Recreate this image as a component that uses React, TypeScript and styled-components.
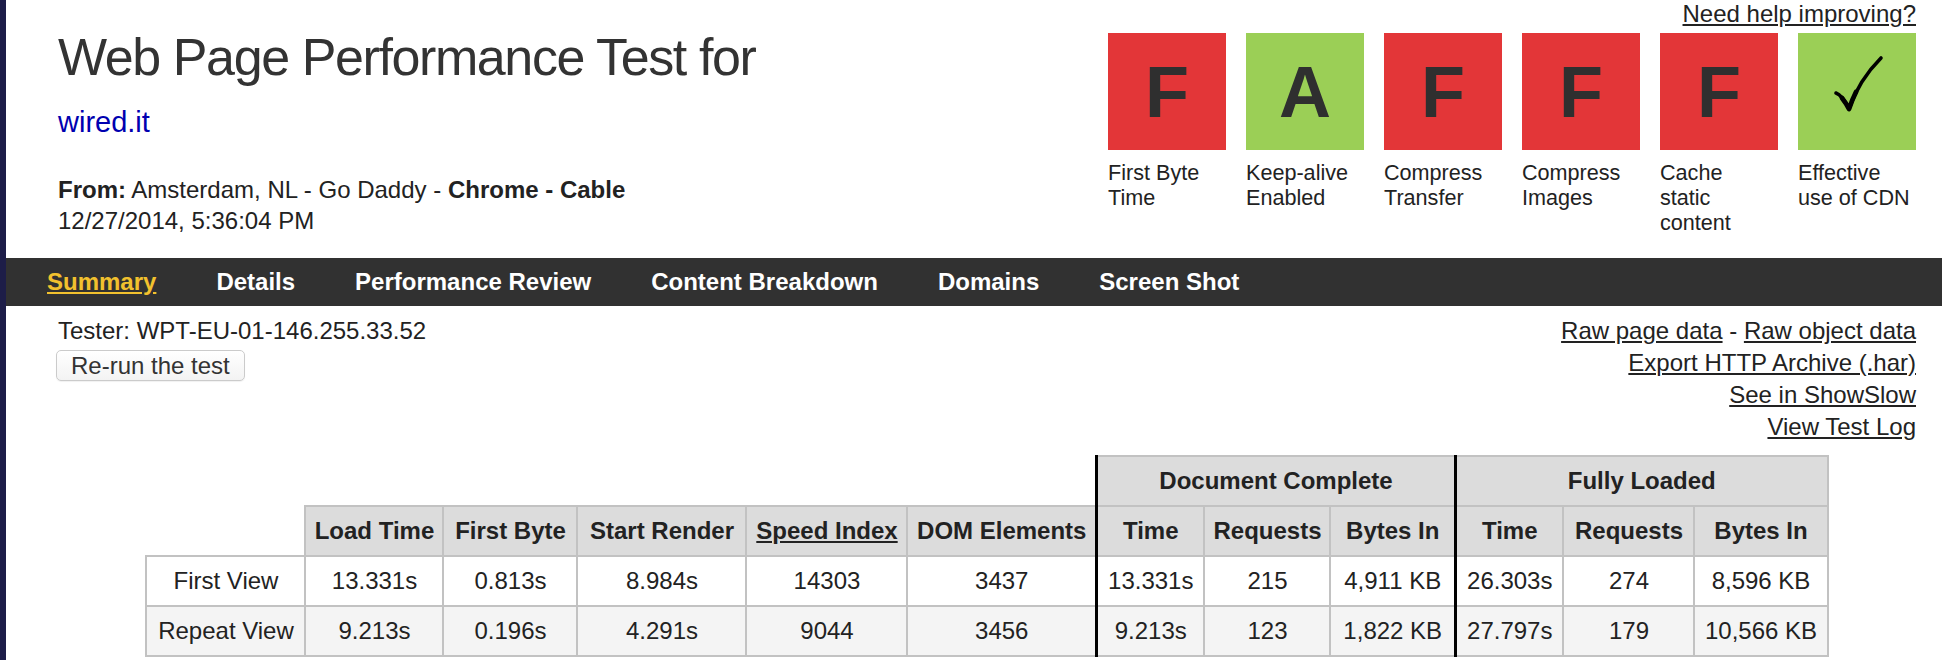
import React from "react";
import styled, { createGlobalStyle } from "styled-components";

const GlobalStyle = createGlobalStyle`
  body {
    margin: 0;
    background: #fff;
    color: #222;
    font-family: "Liberation Sans", Arial, Helvetica, sans-serif;
  }
`;

const Page = styled.div`
  min-height: 660px;
  border-left: 6px solid #1d1d48;
  box-sizing: border-box;
  overflow: hidden;
`;

const Header = styled.header`
  display: flex;
  justify-content: space-between;
  align-items: flex-start;
  height: 258px;
  padding: 0 26px 0 52px;
  box-sizing: border-box;
`;

const TitleBlock = styled.div`
  display: flex;
  flex-direction: column;
`;

const Title = styled.h1`
  margin: 29px 0 0;
  font-size: 52px;
  line-height: 56px;
  letter-spacing: -1.4px;
  font-weight: normal;
  color: #333;
  white-space: nowrap;
`;

const SiteLink = styled.a`
  margin-top: 20px;
  font-size: 29px;
  line-height: 34px;
  color: #0000b0;
  text-decoration: none;
`;

const Meta = styled.div`
  margin-top: 35px;
  font-size: 24px;
  line-height: 31px;
  white-space: nowrap;
`;

const GradeArea = styled.div`
  display: flex;
  flex-direction: column;
  align-items: flex-end;
`;

const TextLink = styled.a`
  color: #222;
  text-decoration: underline;
`;

const HelpLink = styled(TextLink)`
  font-size: 24px;
  line-height: 27px;
`;

const Grades = styled.div`
  display: flex;
  gap: 20px;
  margin-top: 6px;
`;

const Grade = styled.div`
  width: 118px;
  display: flex;
  flex-direction: column;
`;

const GradeBox = styled.div<{ $tone: "bad" | "good" }>`
  height: 117px;
  display: flex;
  align-items: center;
  justify-content: center;
  background: ${(p) => (p.$tone === "good" ? "#9bcf56" : "#e33638")};
  color: #2f2f2f;
  font-size: 72px;
  font-weight: bold;
`;

const GradeLabel = styled.div`
  margin-top: 10px;
  font-size: 21.6px;
  line-height: 25px;
  color: #222;
`;

const Nav = styled.nav`
  display: flex;
  align-items: center;
  height: 48px;
  padding-left: 11px;
  background: #313131;
`;

const NavItem = styled.a<{ $active?: boolean }>`
  padding: 0 30px;
  font-size: 24px;
  font-weight: bold;
  white-space: nowrap;
  color: ${(p) => (p.$active ? "#f2c12e" : "#fff")};
  text-decoration: ${(p) => (p.$active ? "underline" : "none")};
`;

const Content = styled.main`
  padding: 9px 26px 0 52px;
`;

const TopRow = styled.div`
  display: flex;
  justify-content: space-between;
  align-items: flex-start;
`;

const TesterBlock = styled.div`
  display: flex;
  flex-direction: column;
  align-items: flex-start;
`;

const TesterLine = styled.div`
  font-size: 24px;
  line-height: 31px;
`;

const RerunButton = styled.button`
  margin: 4px 0 0 -2px;
  height: 31px;
  padding: 0 14px;
  font-family: inherit;
  font-size: 24px;
  line-height: 29px;
  color: #333;
  background: linear-gradient(#ffffff, #f3f3f3);
  border: 1px solid #cbcbcb;
  border-radius: 5px;
  box-shadow: 0 1px 1px rgba(0, 0, 0, 0.06);
`;

const LinkList = styled.div`
  text-align: right;
  font-size: 24px;
  line-height: 32px;
`;

const Results = styled.table`
  margin: 12px auto 0;
  width: 1681px;
  table-layout: fixed;
  border-collapse: collapse;
  font-size: 24px;
`;

const Col = styled.col<{ $w: number }>`
  width: ${(p) => p.$w}px;
`;

const Blank = styled.td`
  border: none;
  padding: 0;
`;

const HeadCell = styled.th<{ $divider?: boolean }>`
  height: 48px;
  padding: 0 4px;
  background: #dcdcdc;
  border: 2px solid #c2c2c2;
  border-left: ${(p) => (p.$divider ? "3px solid #000" : "2px solid #c2c2c2")};
  font-weight: bold;
  text-align: center;
  white-space: nowrap;
`;

const Row = styled.tr<{ $shade?: boolean }>`
  background: ${(p) => (p.$shade ? "#f4f4f4" : "#fff")};
`;

const Cell = styled.td<{ $divider?: boolean }>`
  height: 48px;
  padding: 0 4px;
  border: 2px solid #c2c2c2;
  border-left: ${(p) => (p.$divider ? "3px solid #000" : "2px solid #c2c2c2")};
  text-align: center;
  white-space: nowrap;
`;

const Check = () => (
  <svg width="118" height="117" viewBox="0 0 118 117">
    <path
      d="M38 60 Q44 62 51 76 Q61 47 83 25"
      fill="none"
      stroke="#000"
      strokeWidth="3.6"
      strokeLinecap="round"
      strokeLinejoin="round"
    />
    <path
      d="M44 65 Q48 70 51 76 Q54 67 58 59"
      fill="none"
      stroke="#000"
      strokeWidth="4.8"
      strokeLinecap="round"
      strokeLinejoin="round"
    />
  </svg>
);

const grades: { letter?: string; tone: "bad" | "good"; label: string }[] = [
  { letter: "F", tone: "bad", label: "First Byte Time" },
  { letter: "A", tone: "good", label: "Keep-alive Enabled" },
  { letter: "F", tone: "bad", label: "Compress Transfer" },
  { letter: "F", tone: "bad", label: "Compress Images" },
  { letter: "F", tone: "bad", label: "Cache static content" },
  { tone: "good", label: "Effective use of CDN" },
];

const navItems = [
  "Summary",
  "Details",
  "Performance Review",
  "Content Breakdown",
  "Domains",
  "Screen Shot",
];

const colWidths = [159, 138, 134, 169, 161, 189, 108, 126, 125, 108, 131, 133];

const metricHeads = [
  "Load Time",
  "First Byte",
  "Start Render",
  "Speed Index",
  "DOM Elements",
  "Time",
  "Requests",
  "Bytes In",
  "Time",
  "Requests",
  "Bytes In",
];

const runs = [
  {
    name: "First View",
    values: ["13.331s", "0.813s", "8.984s", "14303", "3437", "13.331s", "215", "4,911 KB", "26.303s", "274", "8,596 KB"],
  },
  {
    name: "Repeat View",
    values: ["9.213s", "0.196s", "4.291s", "9044", "3456", "9.213s", "123", "1,822 KB", "27.797s", "179", "10,566 KB"],
  },
];

// columns that start a new group get the heavy black rule
const isDivider = (i: number) => i === 5 || i === 8;

export default function App() {
  return (
    <Page>
      <GlobalStyle />
      <Header>
        <TitleBlock>
          <Title>Web Page Performance Test for</Title>
          <SiteLink href="#">wired.it</SiteLink>
          <Meta>
            <b>From:</b> Amsterdam, NL - Go Daddy - <b>Chrome - Cable</b>
            <br />
            12/27/2014, 5:36:04 PM
          </Meta>
        </TitleBlock>

        <GradeArea>
          <HelpLink href="#">Need help improving?</HelpLink>
          <Grades>
            {grades.map((g) => (
              <Grade key={g.label}>
                <GradeBox $tone={g.tone}>{g.letter ?? <Check />}</GradeBox>
                <GradeLabel>{g.label}</GradeLabel>
              </Grade>
            ))}
          </Grades>
        </GradeArea>
      </Header>

      <Nav>
        {navItems.map((item, i) => (
          <NavItem key={item} href="#" $active={i === 0}>
            {item}
          </NavItem>
        ))}
      </Nav>

      <Content>
        <TopRow>
          <TesterBlock>
            <TesterLine>Tester: WPT-EU-01-146.255.33.52</TesterLine>
            <RerunButton>Re-run the test</RerunButton>
          </TesterBlock>
          <LinkList>
            <TextLink href="#">Raw page data</TextLink> -{" "}
            <TextLink href="#">Raw object data</TextLink>
            <br />
            <TextLink href="#">Export HTTP Archive (.har)</TextLink>
            <br />
            <TextLink href="#">See in ShowSlow</TextLink>
            <br />
            <TextLink href="#">View Test Log</TextLink>
          </LinkList>
        </TopRow>

        <Results>
          <colgroup>
            {colWidths.map((w, i) => (
              <Col key={i} $w={w} />
            ))}
          </colgroup>
          <thead>
            <tr>
              <Blank colSpan={6} />
              <HeadCell colSpan={3} $divider>
                Document Complete
              </HeadCell>
              <HeadCell colSpan={3} $divider>
                Fully Loaded
              </HeadCell>
            </tr>
            <tr>
              <Blank />
              {metricHeads.map((h, i) => (
                <HeadCell key={i} $divider={isDivider(i)}>
                  {h === "Speed Index" ? <TextLink href="#">{h}</TextLink> : h}
                </HeadCell>
              ))}
            </tr>
          </thead>
          <tbody>
            {runs.map((run, r) => (
              <Row key={run.name} $shade={r === 1}>
                <Cell>{run.name}</Cell>
                {run.values.map((v, i) => (
                  <Cell key={i} $divider={isDivider(i)}>
                    {v}
                  </Cell>
                ))}
              </Row>
            ))}
          </tbody>
        </Results>
      </Content>
    </Page>
  );
}
